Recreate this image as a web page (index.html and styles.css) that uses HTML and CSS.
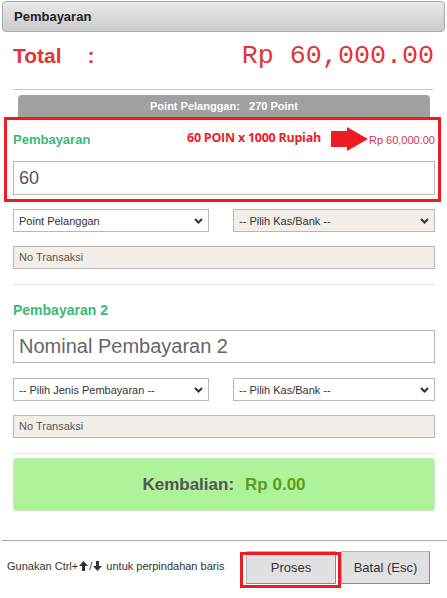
FILE: index.html
```html
<!DOCTYPE html>
<html>
<head>
<meta charset="utf-8">
<link rel="stylesheet" href="styles.css">
</head>
<body>
<div class="page">
  <div class="panel-head">Pembayaran</div>

  <div class="total-row">
    <span class="total-label">Total</span>
    <span class="total-colon">:</span>
    <span class="total-amount">Rp 60,000.00</span>
  </div>
  <div class="rule"></div>

  <div class="point-bar">Point Pelanggan:&nbsp;&nbsp;&nbsp;270 Point</div>

  <div class="highlight">
    <div class="pay-head">
      <span class="pay-label">Pembayaran</span>
      <span class="poin-note">60 POIN x 1000 Rupiah</span>
      <svg class="big-arrow" width="37" height="24" viewBox="0 0 37 24"><path d="M0 4 H16 V0 L37 12 L16 24 V20 H0 Z" fill="#ed1c24"/></svg>
      <span class="poin-rp">Rp 60,000.00</span>
    </div>
    <div class="field field-big">60</div>
  </div>

  <div class="content">
    <div class="select-row first">
      <div class="select sel-left"><span>Point Pelanggan</span><svg class="chev" width="9" height="6" viewBox="0 0 9 6"><path d="M1 1 L4.5 4.5 L8 1" fill="none" stroke="#333" stroke-width="2"/></svg></div>
      <div class="select sel-right muted"><span>-- Pilih Kas/Bank --</span><svg class="chev" width="9" height="6" viewBox="0 0 9 6"><path d="M1 1 L4.5 4.5 L8 1" fill="none" stroke="#333" stroke-width="2"/></svg></div>
    </div>
    <div class="field tx">No Transaksi</div>
    <div class="sep"></div>

    <div class="label2">Pembayaran 2</div>
    <div class="field field-nominal">Nominal Pembayaran 2</div>
    <div class="select-row second">
      <div class="select sel-left"><span>-- Pilih Jenis Pembayaran --</span><svg class="chev" width="9" height="6" viewBox="0 0 9 6"><path d="M1 1 L4.5 4.5 L8 1" fill="none" stroke="#333" stroke-width="2"/></svg></div>
      <div class="select sel-right"><span>-- Pilih Kas/Bank --</span><svg class="chev" width="9" height="6" viewBox="0 0 9 6"><path d="M1 1 L4.5 4.5 L8 1" fill="none" stroke="#333" stroke-width="2"/></svg></div>
    </div>
    <div class="field tx">No Transaksi</div>
    <div class="sep"></div>

    <div class="change-box">
      <span class="change-label">Kembalian:</span>
      <span class="change-amount">Rp 0.00</span>
    </div>
  </div>

  <div class="footer">
    <div class="hint">Gunakan Ctrl+<svg class="kbd-arrow" width="9" height="10" viewBox="0 0 9 10"><path d="M4.5 0 L9 5 L6 5 L6 10 L3 10 L3 5 L0 5 Z" fill="#333"/></svg>/<svg class="kbd-arrow" width="9" height="10" viewBox="0 0 9 10"><path d="M4.5 10 L9 5 L6 5 L6 0 L3 0 L3 5 L0 5 Z" fill="#333"/></svg> untuk perpindahan baris</div>
    <div class="buttons">
      <div class="btn btn-proses">Proses<span class="mark"></span></div>
      <div class="btn btn-batal">Batal (Esc)</div>
    </div>
  </div>
</div>
</body>
</html>
```

FILE: styles.css
```css
html, body {
  margin: 0;
  padding: 0;
  background: #fff;
}
body {
  font-family: "Liberation Sans", Arial, sans-serif;
  color: #333;
}
.page {
  width: 447px;
  height: 598px;
  overflow: hidden;
}

.panel-head {
  margin: 1px 2px 0 2px;
  height: 31px;
  box-sizing: border-box;
  border: 1px solid #a9a9a9;
  border-radius: 4px;
  background: linear-gradient(#e9e9e9, #cbcbcb);
  font-weight: bold;
  font-size: 13px;
  line-height: 29px;
  padding-left: 11px;
  color: #222;
}

.total-row {
  display: flex;
  align-items: center;
  height: 40px;
  margin: 4px 13px 0 13px;
  color: #e23636;
}
.total-label {
  font-weight: bold;
  font-size: 21px;
}
.total-colon {
  font-weight: bold;
  font-size: 21px;
  margin-left: 26px;
}
.total-amount {
  margin-left: auto;
  font-family: "Liberation Mono", "Courier New", monospace;
  font-size: 26.7px;
}
.rule {
  margin: 13px 14px 0 13px;
  height: 1px;
  background: #c8c8c8;
}

.point-bar {
  margin: 5px 17px 0 18px;
  height: 22px;
  background: #a0a0a0;
  border-radius: 4px 4px 0 0;
  color: #fff;
  font-weight: bold;
  font-size: 11px;
  line-height: 22px;
  text-align: center;
}

.highlight {
  margin: 0 6px 0 4px;
  height: 85px;
  box-sizing: border-box;
  border: 3px solid #ed1c24;
  padding: 0 3px 0 6px;
}
.pay-head {
  height: 38px;
  display: flex;
  align-items: center;
}
.pay-label {
  font-weight: bold;
  font-size: 13px;
  color: #3cb878;
  flex: 1;
}
.poin-note {
  font-family: "Open Sans", "Liberation Sans", sans-serif;
  font-weight: bold;
  font-size: 12.5px;
  letter-spacing: -0.25px;
  color: #ed1c24;
  margin-right: 10px;
  margin-top: -3px;
}
.big-arrow {
  display: block;
  margin-right: 1px;
}
.poin-rp {
  font-size: 11px;
  color: #d8304c;
  margin-top: 2px;
}

.field {
  box-sizing: border-box;
  border: 1px solid #b8b8b8;
  padding-left: 5px;
}
.field-big {
  margin-top: 3px;
  height: 34px;
  font-size: 18px;
  line-height: 32px;
  color: #555;
}

.content {
  padding: 0 12px 0 13px;
}
.select-row {
  display: flex;
  justify-content: space-between;
}
.select-row.first { margin-top: 7px; }
.select-row.second { margin-top: 15px; }
.select {
  height: 23px;
  box-sizing: border-box;
  border: 1px solid #b8b8b8;
  display: flex;
  align-items: center;
  justify-content: space-between;
  padding: 0 5px 0 5px;
  font-size: 11px;
  color: #333;
  background: #fff;
}
.select.muted { background: #f2eeea; }
.sel-left { width: 196px; }
.sel-right { width: 202px; }
.chev { display: block; }

.tx {
  margin-top: 14px;
  height: 23px;
  background: #f2eeea;
  font-size: 11px;
  line-height: 21px;
  color: #555;
}
.sep {
  margin-top: 15px;
  height: 1px;
  background: #e6e6e6;
}
.label2 {
  margin-top: 15px;
  line-height: 20px;
  font-size: 14px;
  font-weight: bold;
  color: #3cb878;
}
.field-nominal {
  margin-top: 10px;
  height: 33px;
  font-size: 20px;
  line-height: 31px;
  color: #666;
}

.change-box {
  margin-top: 4px;
  height: 53px;
  box-sizing: border-box;
  background: #aef29a;
  border: 1px solid #c9e8bd;
  border-radius: 3px;
  display: flex;
  align-items: center;
  justify-content: center;
  font-weight: bold;
  font-size: 17px;
}
.change-label { color: #555; }
.change-amount {
  color: #5a9e1c;
  margin-left: 11px;
}

.footer {
  margin: 29px 0 0 2px;
  border-top: 1px solid #aaa;
  display: flex;
  align-items: flex-start;
  padding-top: 10px;
}
.hint {
  font-size: 11px;
  color: #333;
  padding-left: 5px;
  margin-top: 9px;
  white-space: nowrap;
}
.kbd-arrow {
  display: inline-block;
  vertical-align: -1px;
  margin: 0 1px;
}
.buttons {
  display: flex;
  margin-left: auto;
  margin-right: 17px;
  gap: 5px;
}
.btn {
  position: relative;
  height: 33px;
  box-sizing: border-box;
  background: #e1e1e1;
  border: 1px solid #b5b5b5;
  border-right-color: #8a8a8a;
  border-bottom-color: #8a8a8a;
  font-size: 13px;
  line-height: 31px;
  text-align: center;
  color: #333;
}
.btn-proses { width: 90px; }
.btn-batal { width: 89px; }
.mark {
  position: absolute;
  left: -7px;
  top: 0;
  width: 101px;
  height: 36px;
  box-sizing: border-box;
  border: 3px solid #ed1c24;
}
```
